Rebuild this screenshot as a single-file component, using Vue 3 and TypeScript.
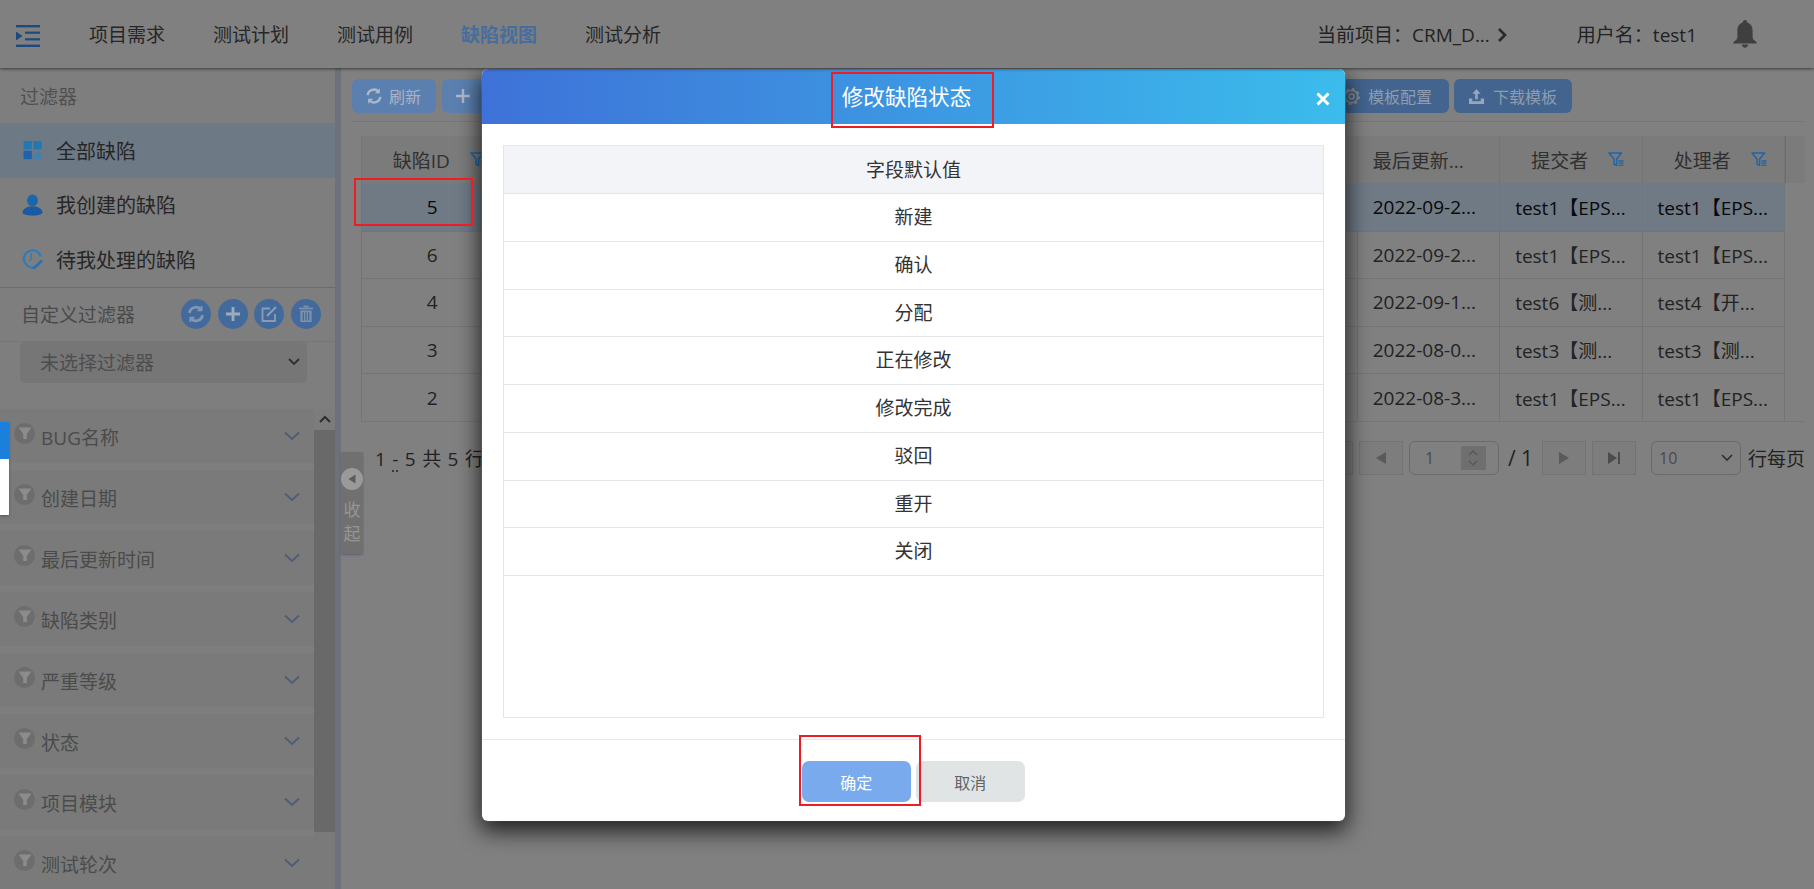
<template>
  <div class="page">
    <header class="topbar">
      <svg class="menu-icon" viewBox="0 0 24 22" width="24" height="22">
        <rect x="0" y="0" width="24" height="2.4" fill="#1f4a80" />
        <rect x="0" y="19.6" width="24" height="2.4" fill="#1f4a80" />
        <rect x="9" y="6.6" width="15" height="2.2" fill="#1f4a80" />
        <rect x="9" y="13.2" width="15" height="2.2" fill="#1f4a80" />
        <path d="M0 6.5 L6.5 11 L0 15.5 Z" fill="#1f4a80" />
      </svg>
      <nav class="nav">
        <a v-for="item in navItems" :key="item" class="nav-item" :class="{ active: item === '缺陷视图' }">{{ item }}</a>
      </nav>
      <div class="project">当前项目：CRM_D...</div>
      <svg class="project-arrow" viewBox="0 0 10 16" width="10" height="16">
        <path d="M2 2 L8 8 L2 14" fill="none" stroke="#2a2a2a" stroke-width="2.6" />
      </svg>
      <div class="user">用户名：test1</div>
      <svg class="bell" viewBox="0 0 24 28" width="24" height="28">
        <path d="M12 0 C13.4 0 14.2 1 14.2 2.4 C18 3.6 19.6 6.6 19.6 10.6 L19.6 17 C19.6 19 21 20.4 23.6 22 L23.6 23.4 L0.4 23.4 L0.4 22 C3 20.4 4.4 19 4.4 17 L4.4 10.6 C4.4 6.6 6 3.6 9.8 2.4 C9.8 1 10.6 0 12 0 Z" fill="#3f3f3f" />
        <path d="M8.8 24.6 L15.2 24.6 C15 26.6 13.6 27.8 12 27.8 C10.4 27.8 9 26.6 8.8 24.6 Z" fill="#3f3f3f" />
      </svg>
    </header>

    <div class="body">
      <aside class="sidebar">
        <div class="side-title">过滤器</div>
        <div class="quick active">
          <svg viewBox="0 0 20 20" width="20" height="20">
            <rect x="1" y="1" width="8.4" height="8.4" rx="1" fill="#2378b4" />
            <rect x="10.8" y="1" width="8.4" height="8.4" rx="1" fill="#2378b4" />
            <rect x="1" y="10.8" width="8.4" height="8.4" rx="1" fill="#1d62ac" />
            <path d="M10.8 14h1.5v5h-1.5zM13.2 12.6h1.5V19h-1.5zM15.6 11h1.5v8h-1.5zM18 12.6h1.2V19H18z" fill="#3c80b0" />
          </svg>
          <span>全部缺陷</span>
        </div>
        <div class="quick">
          <svg viewBox="0 0 20 22" width="20" height="22">
            <ellipse cx="10" cy="6.5" rx="5.4" ry="6" fill="#1a66ac" />
            <path d="M0 19 C0 15 4 13 7 12.5 L13 12.5 C16 13 20 15 20 19 C17 22.5 3 22.5 0 19 Z" fill="#1a5aa4" />
          </svg>
          <span>我创建的缺陷</span>
        </div>
        <div class="quick">
          <svg viewBox="0 0 22 22" width="22" height="22">
            <path d="M14.2 19.2 A9 9 0 1 1 19.6 8.4" fill="none" stroke="#2a7cc0" stroke-width="2.2" />
            <path d="M9.6 5 L9.6 11 L7.4 13" fill="none" stroke="#2a7cc0" stroke-width="1.4" />
            <path d="M11.6 19.4 L20 11.6 L22 13.6 L13.8 21.4 L11.2 21.8 Z" fill="#2a72b8" />
          </svg>
          <span>待我处理的缺陷</span>
        </div>

        <div class="custom">
          <span class="custom-label">自定义过滤器</span>
          <button v-for="b in customButtons" :key="b" class="round-btn">
            <svg viewBox="0 0 20 20" width="20" height="20">
              <g v-if="b === 'refresh'" fill="none" stroke="#8197b2" stroke-width="2.8">
                <path d="M3.5 9 A6.6 6.6 0 0 1 15 5.4" />
                <path d="M16.5 11 A6.6 6.6 0 0 1 5 14.6" />
                <path d="M15.6 2 L15.6 6.4 L11.4 6.4" stroke-width="1.8" />
                <path d="M4.4 18 L4.4 13.6 L8.6 13.6" stroke-width="1.8" />
              </g>
              <path v-else-if="b === 'add'" d="M10 3 V17 M3 10 H17" fill="none" stroke="#9eacbd" stroke-width="2.8" />
              <g v-else-if="b === 'edit'" fill="none" stroke="#8a9cb3" stroke-width="1.8">
                <path d="M16 10 V17 H3.5 V4.5 H11" />
                <path d="M8 12 L17 3" stroke-width="2.2" />
              </g>
              <g v-else fill="#8092a9">
                <rect x="3" y="3.6" width="14" height="1.7" />
                <rect x="7.5" y="1.6" width="5" height="1.6" />
                <path d="M4.4 6.4 H15.6 V18 H4.4 Z M6.6 8.2 V16.4 H8 V8.2 Z M9.3 8.2 V16.4 H10.7 V8.2 Z M12 8.2 V16.4 H13.4 V8.2 Z" fill-rule="evenodd" />
              </g>
            </svg>
          </button>
        </div>
        <div class="filter-select">
          <span>未选择过滤器</span>
          <svg viewBox="0 0 12 8" width="12" height="8"><path d="M1 1 L6 6 L11 1" fill="none" stroke="#2f2f2f" stroke-width="1.8" /></svg>
        </div>

        <div class="filter-area">
          <div class="filter-list">
            <div v-for="f in filters" :key="f" class="filter-row">
              <span class="funnel">
                <svg viewBox="0 0 14 14" width="14" height="14"><path d="M0.5 1.5 H13.5 L8.8 8 V13 H5.2 V8 Z" fill="#8c8c8c" /></svg>
              </span>
              <span class="filter-name">{{ f }}</span>
              <svg class="filter-chevron" viewBox="0 0 16 10" width="16" height="10"><path d="M1 1.5 L8 8 L15 1.5" fill="none" stroke="#4d5c78" stroke-width="1.8" /></svg>
            </div>
          </div>
          <div class="side-scroll">
            <div class="scroll-up">
              <svg viewBox="0 0 12 8" width="12" height="8"><path d="M1 7 L6 2 L11 7" fill="none" stroke="#2e2e2e" stroke-width="2" /></svg>
            </div>
            <div class="scroll-thumb"></div>
          </div>
        </div>
      </aside>

      <div class="splitter"></div>

      <main class="main">
        <div class="toolbar">
          <button class="tool light refresh">
            <svg viewBox="0 0 20 20" width="18" height="18">
              <g fill="none" stroke="#aeb9c8" stroke-width="2.6">
                <path d="M3 9 A7 7 0 0 1 15 5" />
                <path d="M17 11 A7 7 0 0 1 5 15" />
              </g>
              <path d="M16.5 1.5 V7 H11 Z M3.5 18.5 V13 H9 Z" fill="#aeb9c8" />
            </svg>
            <span>刷新</span>
          </button>
          <button class="tool light add">
            <svg viewBox="0 0 16 16" width="16" height="16"><path d="M8 1 V15 M1 8 H15" stroke="#aeb9c8" stroke-width="2.4" /></svg>
          </button>
          <button class="tool dark config">
            <svg viewBox="0 0 20 20" width="17" height="17">
              <circle cx="10" cy="10" r="3" fill="none" stroke="#8f8f8f" stroke-width="1.7" />
              <circle cx="10" cy="10" r="7.4" fill="none" stroke="#8f8f8f" stroke-width="1.7" />
              <circle cx="10" cy="10" r="9" fill="none" stroke="#8f8f8f" stroke-width="1.8" stroke-dasharray="3.2 3.9" />
            </svg>
            <span>模板配置</span>
          </button>
          <button class="tool dark download">
            <svg viewBox="0 0 18 18" width="17" height="17">
              <path d="M9 1 L13.4 6 H10.4 V12 H7.6 V6 H4.6 Z" fill="#98a6b9" />
              <path d="M1 11 H4.5 V14 H13.5 V11 H17 V17 H1 Z" fill="#98a6b9" />
            </svg>
            <span>下载模板</span>
          </button>
        </div>

        <div class="table-wrap">
          <table class="defects">
            <colgroup>
              <col v-for="n in 10" :key="n" class="col" />
              <col class="col-gutter" />
            </colgroup>
            <thead>
              <tr>
                <th>
                  <div class="th-inner"><span>缺陷ID</span>
                    <svg class="th-filter" viewBox="0 0 16 15" width="16" height="15"><path d="M1 1 H13.5 L8.6 7 V13.5 L6 12 V7 Z" fill="none" stroke="#1e66a8" stroke-width="1.5" stroke-linejoin="round" /><path d="M10.5 9 H15.5 M10.5 11.2 H15.5 M10.5 13.4 H15.5" stroke="#1e66a8" stroke-width="1.3" /></svg>
                  </div>
                </th>
                <th v-for="n in 6" :key="n"></th>
                <th class="th-left">最后更新...</th>
                <th v-for="h in ['提交者', '处理者']" :key="h">
                  <div class="th-inner"><span>{{ h }}</span>
                    <svg class="th-filter" viewBox="0 0 16 15" width="16" height="15"><path d="M1 1 H13.5 L8.6 7 V13.5 L6 12 V7 Z" fill="none" stroke="#1e66a8" stroke-width="1.5" stroke-linejoin="round" /><path d="M10.5 9 H15.5 M10.5 11.2 H15.5 M10.5 13.4 H15.5" stroke="#1e66a8" stroke-width="1.3" /></svg>
                  </div>
                </th>
                <th class="gutter"></th>
              </tr>
            </thead>
            <tbody>
              <tr v-for="(r, i) in rows" :key="r.id" :class="{ selected: i === 0 }">
                <td class="id">{{ r.id }}</td>
                <td v-for="n in 6" :key="n"></td>
                <td>{{ r.updated }}</td>
                <td>{{ r.submitter }}</td>
                <td>{{ r.handler }}</td>
                <td class="td-gutter"></td>
              </tr>
            </tbody>
          </table>
        </div>

        <div class="pager">
          <div class="pager-count">1 <abbr>-</abbr> 5 共 5 行</div>
          <div class="pager-controls">
            <button class="page-btn">
              <svg viewBox="0 0 14 14" width="14" height="14"><path d="M1 1 H3 V13 H1 Z M13 1 V13 L4 7 Z" fill="#5a5a5a" /></svg>
            </button>
            <button class="page-btn">
              <svg viewBox="0 0 12 14" width="12" height="14"><path d="M11 1 V13 L1 7 Z" fill="#5a5a5a" /></svg>
            </button>
            <div class="page-input">
              <span>1</span>
              <div class="spin">
                <svg viewBox="0 0 12 20" width="12" height="20"><path d="M2 7 L6 3 L10 7 M2 13 L6 17 L10 13" fill="none" stroke="#585858" stroke-width="1.4" /></svg>
              </div>
            </div>
            <span class="page-total">/ 1</span>
            <button class="page-btn">
              <svg viewBox="0 0 12 14" width="12" height="14"><path d="M1 1 V13 L11 7 Z" fill="#5a5a5a" /></svg>
            </button>
            <button class="page-btn last">
              <svg viewBox="0 0 14 14" width="14" height="14"><path d="M1 1 V13 L10 7 Z M11 1 H13 V13 H11 Z" fill="#4c4c4c" /></svg>
            </button>
            <div class="page-size">
              <span>10</span>
              <svg viewBox="0 0 12 8" width="12" height="8"><path d="M1 1 L6 6 L11 1" fill="none" stroke="#2f2f2f" stroke-width="1.6" /></svg>
            </div>
            <span class="per-page">行每页</span>
          </div>
        </div>

        <div class="collapse-tab">
          <span class="collapse-dot">
            <svg viewBox="0 0 8 10" width="8" height="10"><path d="M7.5 0.5 V9.5 L0.5 5 Z" fill="#5c5c5c" /></svg>
          </span>
          <span class="collapse-text">收<br />起</span>
        </div>
      </main>
    </div>

    <div class="toast-edge">
      <div class="toast-head"></div>
      <div class="toast-body"></div>
    </div>

    <section class="modal">
      <div class="modal-head">
        <h2>修改缺陷状态</h2>
        <svg class="modal-close" viewBox="0 0 14 14" width="14" height="14"><path d="M1.5 1.5 L12.5 12.5 M12.5 1.5 L1.5 12.5" stroke="#fff" stroke-width="3" /></svg>
      </div>
      <div class="modal-body">
        <div class="status-table">
          <div class="status-head">字段默认值</div>
          <div v-for="s in statuses" :key="s" class="status-row">{{ s }}</div>
        </div>
      </div>
      <div class="modal-foot">
        <button class="btn-ok">确定</button>
        <button class="btn-cancel">取消</button>
      </div>
    </section>

    <div class="mark mark-title"></div>
    <div class="mark mark-id"></div>
    <div class="mark mark-ok"></div>
  </div>
</template>

<script setup lang="ts">
const navItems = ['项目需求', '测试计划', '测试用例', '缺陷视图', '测试分析']
const customButtons = ['refresh', 'add', 'edit', 'delete']
const filters = ['BUG名称', '创建日期', '最后更新时间', '缺陷类别', '严重等级', '状态', '项目模块', '测试轮次']
const statuses = ['新建', '确认', '分配', '正在修改', '修改完成', '驳回', '重开', '关闭']

interface DefectRow {
  id: number
  updated: string
  submitter: string
  handler: string
}

const rows: DefectRow[] = [
  { id: 5, updated: '2022-09-2...', submitter: 'test1【EPS...', handler: 'test1【EPS...' },
  { id: 6, updated: '2022-09-2...', submitter: 'test1【EPS...', handler: 'test1【EPS...' },
  { id: 4, updated: '2022-09-1...', submitter: 'test6【测...', handler: 'test4【开...' },
  { id: 3, updated: '2022-08-0...', submitter: 'test3【测...', handler: 'test3【测...' },
  { id: 2, updated: '2022-08-3...', submitter: 'test1【EPS...', handler: 'test1【EPS...' }
]
</script>

<style>
html,
body {
  margin: 0;
  background: #808080;
  overflow: hidden;
}
</style>

<style scoped>
.page {
  position: relative;
  width: 1814px;
  height: 889px;
  overflow: hidden;
  background: #808080;
  font-family: "Open Sans", "Noto Sans CJK SC", sans-serif;
  color: #262626;
}

.topbar {
  display: flex;
  align-items: center;
  height: 68px;
  padding-left: 16px;
  box-sizing: border-box;
  background: #808080;
  box-shadow: 0 1px 3px rgba(0, 0, 0, 0.55);
  position: relative;
  z-index: 1;
  font-size: 19px;
}

.menu-icon {
  margin-top: 4px;
  flex: none;
}

.nav {
  display: flex;
  gap: 48px;
  margin-left: 49px;
  flex: 1;
}

.nav-item {
  color: #262626;
  white-space: nowrap;
}

.nav-item.active {
  color: #476d9e;
  font-weight: 700;
}

.project,
.user {
  white-space: nowrap;
  color: #222;
}

.project-arrow {
  margin: 2px 0 0 7px;
}

.user {
  margin-left: 70px;
}

.bell {
  margin: 0 57px 0 36px;
  filter: blur(0.5px);
}

.body {
  display: flex;
  height: 821px;
}

.sidebar {
  width: 335px;
  flex: none;
  background: #7e7e7e;
  font-size: 19px;
}

.side-title {
  height: 55px;
  line-height: 58px;
  padding-left: 20px;
  color: #505050;
}

.quick {
  display: flex;
  align-items: center;
  height: 54.5px;
  padding-left: 22px;
  box-sizing: border-box;
  font-size: 20px;
  color: #262626;
}

.quick svg {
  width: 21px;
  flex: none;
  margin-right: 13px;
}

.quick.active {
  background: #6d7a86;
}

.custom {
  display: flex;
  align-items: center;
  height: 55px;
  margin-top: 0;
  padding-left: 21px;
  box-sizing: border-box;
  border-top: 1px solid #6c6c6c;
  border-bottom: 1px solid #767676;
}

.custom-label {
  width: 160px;
  color: #4a4a4a;
}

.round-btn {
  display: flex;
  align-items: center;
  justify-content: center;
  width: 30px;
  height: 30px;
  margin-right: 6.6px;
  padding: 0;
  border: none;
  border-radius: 50%;
  background: #436a9c;
}

.filter-select {
  display: flex;
  align-items: center;
  justify-content: space-between;
  width: 287px;
  height: 41px;
  margin: 0 0 26px 20px;
  padding: 0 7px 0 20px;
  box-sizing: border-box;
  border-radius: 5px;
  background: #767676;
  color: #4d4d4d;
}

.filter-area {
  display: flex;
  height: 480px;
  overflow: hidden;
}

.filter-list {
  flex: 1;
  display: flex;
  flex-direction: column;
  gap: 7px;
}

.filter-row {
  display: flex;
  align-items: center;
  height: 54px;
  flex: none;
  padding-left: 14px;
  padding-right: 14px;
  box-sizing: border-box;
  background: #7a7a7a;
  color: #4b4b4b;
}

.funnel {
  display: flex;
  align-items: center;
  justify-content: center;
  width: 21px;
  height: 21px;
  margin-top: -5px;
  border-radius: 50%;
  background: #6d6d6d;
}

.filter-name {
  margin-left: 6px;
  padding-top: 2px;
  flex: 1;
}

.side-scroll {
  width: 21px;
  flex: none;
  background: #7a7a7a;
}

.scroll-up {
  display: flex;
  align-items: center;
  justify-content: center;
  height: 21px;
  background: #7c7c7c;
}

.scroll-thumb {
  height: 402px;
  background: #696969;
}

.splitter {
  width: 6px;
  flex: none;
  background: #6e717a;
}

.main {
  position: relative;
  flex: 1;
  min-width: 0;
  padding: 11px 9px 0 11px;
  box-sizing: border-box;
}

.toolbar {
  display: flex;
  height: 43px;
  border-bottom: 1px solid #767676;
  box-sizing: border-box;
  font-size: 16px;
}

.tool {
  display: flex;
  align-items: center;
  height: 34px;
  padding: 0;
  border: none;
  border-radius: 6px;
  font-family: inherit;
  font-size: 16px;
}

.tool.light {
  background: #5b80b0;
  color: #a8b4c4;
}

.tool.dark {
  background: #43648f;
  color: #8e9cb0;
}

.refresh {
  width: 84px;
  padding-left: 13px;
  gap: 6px;
}

.add {
  width: 200px;
  margin-left: 6px;
  padding-left: 13px;
}

.config {
  width: 120px;
  margin-left: 687px;
  padding-left: 14px;
  gap: 8px;
  justify-content: flex-start;
}

.download {
  width: 118px;
  margin-left: 5px;
  padding-left: 14px;
  gap: 8px;
}

.table-wrap {
  margin: 14px 0 0 9px;
  width: 1444px;
  border-bottom: 1px solid #767676;
  margin-right: 0;
}

.defects {
  width: 1444px;
  table-layout: fixed;
  border-collapse: separate;
  border-spacing: 0;
  font-size: 19px;
}

.col {
  width: 142.4px;
}

.col-gutter {
  width: 20px;
}

.defects th {
  height: 47px;
  padding: 0;
  font-weight: 400;
  background: #7b7b7b;
  border-right: 1px solid #747474;
  color: #303030;
  text-align: center;
  box-sizing: border-box;
}

.defects th:first-child,
.defects td:first-child {
  border-left: 1px solid #747474;
}

.defects .th-left {
  text-align: left;
  padding-left: 15px;
  white-space: nowrap;
}

.th-inner {
  display: flex;
  align-items: center;
  justify-content: center;
  padding-left: 14px;
  gap: 20px;
}

.th-filter {
  flex: none;
}

.defects .gutter {
  border-right: none;
  border-left: 1px solid #6c6c6c;
}

.defects td {
  height: 47.6px;
  padding: 0 0 0 15px;
  box-sizing: border-box;
  border-top: 1px solid #747474;
  border-right: 1px solid #747474;
  color: #222;
  white-space: nowrap;
  overflow: hidden;
}

.defects td.id {
  text-align: center;
  padding: 0;
}

.defects .selected td {
  background: #6f7a85;
  color: #080808;
  border-top-color: #6f7a85;
  border-right-color: #6b7781;
}

.defects td.td-gutter,
.defects .selected td.td-gutter {
  background: transparent;
  border: none;
}

.pager {
  display: flex;
  align-items: center;
  justify-content: space-between;
  height: 34px;
  margin-top: 19px;
  font-size: 19px;
  color: #222;
}

.pager-count {
  margin-left: 23px;
  word-spacing: 1.5px;
  white-space: nowrap;
}

.pager-count abbr {
  text-decoration: underline dotted #3a3a3a;
  text-underline-offset: 5px;
}

.pager-controls {
  display: flex;
  align-items: center;
}

.page-btn {
  display: flex;
  align-items: center;
  justify-content: center;
  width: 44px;
  height: 34px;
  margin-right: 6px;
  padding: 0;
  border: 1px solid #737373;
  background: #7d7d7d;
  box-sizing: border-box;
}

.page-input {
  display: flex;
  align-items: center;
  justify-content: space-between;
  width: 90px;
  height: 34px;
  padding: 0 12px 0 15px;
  box-sizing: border-box;
  border: 1px solid #6a6a6a;
  border-radius: 6px;
  font-size: 16px;
  color: #4a4a4a;
}

.spin {
  display: flex;
  align-items: center;
  justify-content: center;
  width: 25px;
  height: 24px;
  background: #6f6f6f;
}

.page-total {
  width: 43px;
  font-size: 21px;
  text-align: center;
  white-space: nowrap;
}

.page-btn.last {
  margin-right: 15px;
}

.page-size {
  display: flex;
  align-items: center;
  justify-content: space-between;
  width: 90px;
  height: 34px;
  padding: 0 7px 0 7px;
  box-sizing: border-box;
  border: 1px solid #6a6a6a;
  border-radius: 6px;
  font-size: 16px;
  color: #4a4a4a;
}

.per-page {
  margin-left: 7px;
  white-space: nowrap;
}

.collapse-tab {
  position: absolute;
  left: 0;
  top: 384px;
  display: flex;
  flex-direction: column;
  align-items: center;
  width: 22px;
  height: 102px;
  padding-top: 16px;
  box-sizing: border-box;
  background: #707070;
  border-radius: 2px;
  box-shadow: 0 1px 2px #5b5b7a;
}

.collapse-dot {
  display: flex;
  align-items: center;
  justify-content: center;
  width: 22px;
  height: 22px;
  flex: none;
  border-radius: 50%;
  background: #9a9a9a;
}

.collapse-text {
  margin-top: 8px;
  font-size: 17px;
  line-height: 24px;
  color: #969696;
}

.toast-edge {
  position: absolute;
  left: 0;
  top: 422px;
  width: 9px;
  box-shadow: 0 1px 3px rgba(0, 0, 0, 0.3);
}

.toast-head {
  height: 37px;
  background: #1a80dc;
}

.toast-body {
  height: 56px;
  background: #fff;
}

.modal {
  position: absolute;
  left: 482px;
  top: 69px;
  display: flex;
  flex-direction: column;
  width: 863px;
  height: 752px;
  border-radius: 6px;
  overflow: hidden;
  background: #fff;
  box-shadow: 0 8px 22px 2px rgba(0, 0, 0, 0.75), 0 0 0 1px #8f8f8f;
}

.modal-head {
  position: relative;
  height: 55px;
  flex: none;
  background: linear-gradient(90deg, #3e72d8 0%, #3bbcec 100%);
  text-align: center;
}

.modal-head h2 {
  margin: 0;
  padding-right: 14px;
  font-size: 21.6px;
  font-weight: 400;
  line-height: 55px;
  color: #fff;
}

.modal-close {
  position: absolute;
  right: 15px;
  top: 23px;
}

.modal-body {
  padding: 21px 21px 21px 21px;
  flex: none;
  border-bottom: 1px solid #e6e8ea;
}

.status-table {
  height: 573px;
  box-sizing: border-box;
  border: 1px solid #e2e6ea;
  font-size: 19px;
  color: #333;
  text-align: center;
}

.status-head {
  height: 47px;
  line-height: 49px;
  background: #f3f4f8;
  border-bottom: 1px solid #e2e6ea;
  box-sizing: content-box;
}

.status-row {
  height: 46.75px;
  line-height: 47px;
  border-bottom: 1px solid #e2e6ea;
  margin-top: 0;
}

.modal-foot {
  display: flex;
  gap: 5.5px;
  padding: 21px 0 0 320px;
}

.modal-foot button {
  width: 108.5px;
  height: 41px;
  padding: 0;
  border: none;
  border-radius: 7px;
  font-family: inherit;
  font-size: 16px;
}

.btn-ok {
  background: #79aaee;
  color: #fff;
}

.btn-cancel {
  background: #e0e4e5;
  color: #5f6567;
}

.mark {
  position: absolute;
  border: 2px solid #ee1c25;
  box-sizing: border-box;
  pointer-events: none;
}

.mark-title {
  left: 831px;
  top: 72px;
  width: 163px;
  height: 56px;
}

.mark-id {
  left: 354px;
  top: 178px;
  width: 119px;
  height: 48px;
}

.mark-ok {
  left: 799px;
  top: 735px;
  width: 122px;
  height: 71px;
}
</style>
